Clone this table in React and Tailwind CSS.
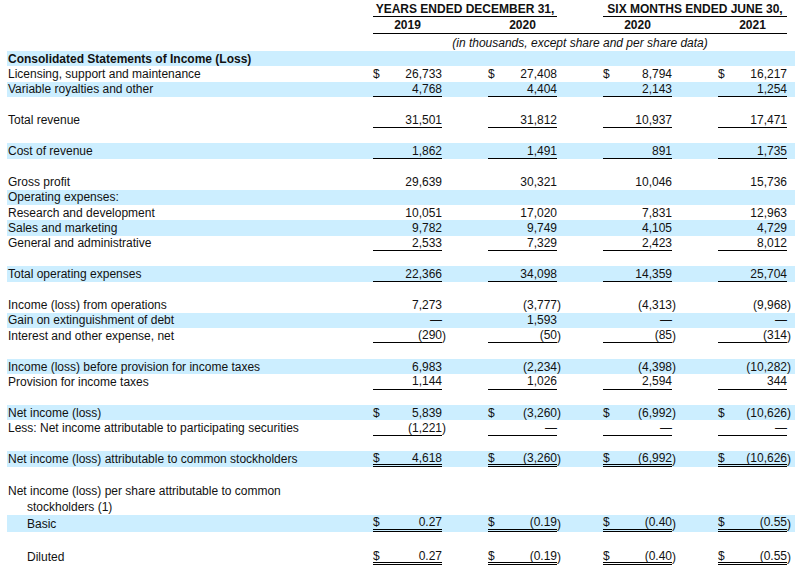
const BLUE = "bg-[#cceeff]";

const PER_SHARE = ["0.27", "(0.19)", "(0.40)", "(0.55)"];

const ROWS = [
  { label: "Consolidated Statements of Income (Loss)", bold: true, blue: true },
  { label: "Licensing, support and maintenance", vals: ["26,733", "27,408", "8,794", "16,217"], dollar: true },
  { label: "Variable royalties and other", vals: ["4,768", "4,404", "2,143", "1,254"], blue: true, line: 1 },
  {},
  { label: "Total revenue", vals: ["31,501", "31,812", "10,937", "17,471"], line: 1 },
  {},
  { label: "Cost of revenue", vals: ["1,862", "1,491", "891", "1,735"], blue: true, line: 1 },
  {},
  { label: "Gross profit", vals: ["29,639", "30,321", "10,046", "15,736"] },
  { label: "Operating expenses:", blue: true },
  { label: "Research and development", vals: ["10,051", "17,020", "7,831", "12,963"] },
  { label: "Sales and marketing", vals: ["9,782", "9,749", "4,105", "4,729"], blue: true },
  { label: "General and administrative", vals: ["2,533", "7,329", "2,423", "8,012"], line: 1 },
  {},
  { label: "Total operating expenses", vals: ["22,366", "34,098", "14,359", "25,704"], blue: true, line: 1 },
  {},
  { label: "Income (loss) from operations", vals: ["7,273", "(3,777)", "(4,313)", "(9,968)"] },
  { label: "Gain on extinguishment of debt", vals: ["—", "1,593", "—", "—"], blue: true },
  { label: "Interest and other expense, net", vals: ["(290)", "(50)", "(85)", "(314)"], line: 1 },
  {},
  { label: "Income (loss) before provision for income taxes", vals: ["6,983", "(2,234)", "(4,398)", "(10,282)"], blue: true },
  { label: "Provision for income taxes", vals: ["1,144", "1,026", "2,594", "344"], line: 1 },
  {},
  { label: "Net income (loss)", vals: ["5,839", "(3,260)", "(6,992)", "(10,626)"], dollar: true, blue: true },
  { label: "Less: Net income attributable to participating securities", vals: ["(1,221)", "—", "—", "—"], line: 1 },
  {},
  { label: "Net income (loss) attributable to common stockholders", vals: ["4,618", "(3,260)", "(6,992)", "(10,626)"], dollar: true, blue: true, line: 2, h: "h-[16px]" },
  { h: "h-[16px]" },
  { label: "Net income (loss) per share attributable to common", h: "h-[16px]" },
  { label: "stockholders (1)", indent: true, h: "h-[16px]" },
  { label: "Basic", indent: true, vals: PER_SHARE, dollar: true, blue: true, line: 2, h: "h-[17px]" },
  { h: "h-[17px]" },
  { label: "Diluted", indent: true, vals: PER_SHARE, dollar: true, line: 2, h: "h-[16px]" },
];

function Cell({ value, dollar, line, last }) {
  const neg = value?.endsWith(")");
  const shown = neg ? value.slice(0, -1) : value;
  const border = line === 2 ? "border-b-[3px] border-double border-black" : line === 1 ? "border-b border-black" : "";
  return (
    <div className={`flex h-full ${last ? "w-[77px]" : "w-[115px]"}`}>
      <div className={`w-[69px] h-full flex items-center justify-between ${border}`}>
        <span>{dollar ? "$" : ""}</span>
        <span>{shown}</span>
      </div>
      <div className="w-[6px] h-full flex items-center">{neg ? ")" : ""}</div>
    </div>
  );
}

function Row({ row }) {
  const h = row.h || "h-[15.4px]";
  return (
    <div className={`flex ${h} ${row.blue ? BLUE : ""}`}>
      <div className={`w-[366px] flex items-center whitespace-nowrap ${row.indent ? "pl-[20px]" : "pl-[1px]"} ${row.bold ? "font-bold" : ""}`}>
        {row.label}
      </div>
      {row.vals && row.vals.map((v, i) => (
        <Cell key={i} value={v} dollar={row.dollar} line={row.line} last={i === 3} />
      ))}
    </div>
  );
}

export default function App() {
  return (
    <div className="w-[803px] h-[571px] bg-white text-[#111] text-[12px] leading-[14px] font-['Liberation_Sans',Arial,sans-serif] overflow-hidden">
      <div className="pl-[7px]">
        {/* header */}
        <div className="flex h-[17px]">
          <div className="w-[366px]" />
          <div className="w-[184px] border-b border-black font-bold text-center flex items-end justify-center">YEARS ENDED DECEMBER 31,</div>
          <div className="w-[46px]" />
          <div className="w-[184px] border-b border-black font-bold text-center flex items-end justify-center">SIX MONTHS ENDED JUNE 30,</div>
        </div>
        <div className="flex h-[17px]">
          <div className="w-[366px]" />
          <div className="w-[414px] flex border-b border-black font-bold">
            {["2019", "2020", "2020", "2021"].map((y, i) => (
              <div key={i} className={`flex ${i === 3 ? "w-[69px]" : "w-[115px]"}`}>
                <div className="w-[69px] flex items-center justify-center">{y}</div>
              </div>
            ))}
          </div>
        </div>
        <div className="flex h-[17px]">
          <div className="w-[366px]" />
          <div className="w-[414px] flex items-center justify-center italic">(in thousands, except share and per share data)</div>
        </div>

        {/* body */}
        <div className="w-[788px]">
          {ROWS.map((r, i) => <Row key={i} row={r} />)}
        </div>
      </div>
    </div>
  );
}
